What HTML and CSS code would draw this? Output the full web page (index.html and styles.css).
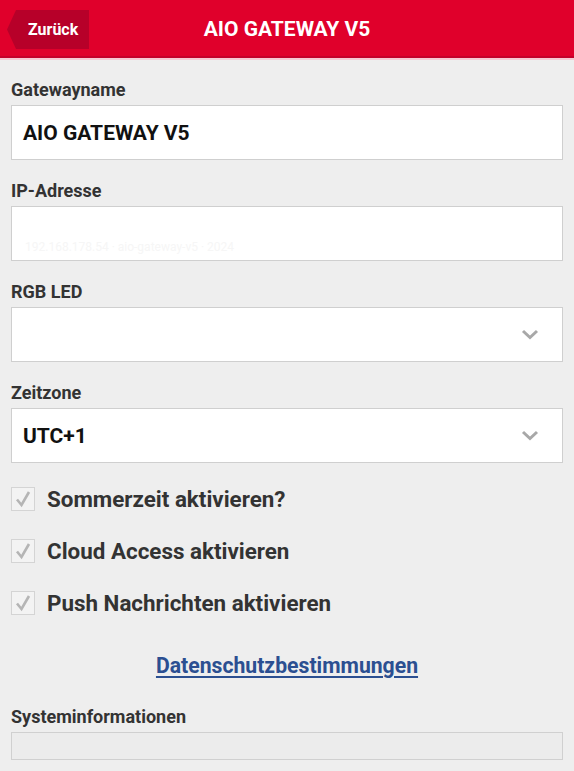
FILE: index.html
```html
<!DOCTYPE html>
<html lang="de">
<head>
<meta charset="utf-8">
<title>AIO GATEWAY V5</title>
<link rel="stylesheet" href="styles.css">
</head>
<body>
<header class="topbar">
  <a class="back" href="#">Zurück</a>
  <h1 class="title">AIO GATEWAY V5</h1>
</header>
<main class="content">
  <div class="field">
    <label class="label">Gatewayname</label>
    <div class="input"><span class="value">AIO GATEWAY V5</span></div>
  </div>
  <div class="field">
    <label class="label">IP-Adresse</label>
    <div class="input"><span class="faint">192.168.178.54 · aio-gateway-v5 · 2024</span></div>
  </div>
  <div class="field">
    <label class="label">RGB LED</label>
    <div class="input select"><span class="value"></span>
      <svg class="chev" width="18" height="11" viewBox="0 0 18 11"><path d="M2 2 L9 8.5 L16 2" fill="none" stroke="#a8a8a8" stroke-width="3"/></svg>
    </div>
  </div>
  <div class="field">
    <label class="label">Zeitzone</label>
    <div class="input select"><span class="value">UTC+1</span>
      <svg class="chev" width="18" height="11" viewBox="0 0 18 11"><path d="M2 2 L9 8.5 L16 2" fill="none" stroke="#a8a8a8" stroke-width="3"/></svg>
    </div>
  </div>
  <div class="checks">
    <div class="check"><span class="box"><svg width="22" height="22" viewBox="0 0 22 22"><path d="M5 11.5 L9.5 17 L17 4" fill="none" stroke="#b5b5b5" stroke-width="2.6"/></svg></span><span class="ctext">Sommerzeit aktivieren?</span></div>
    <div class="check"><span class="box"><svg width="22" height="22" viewBox="0 0 22 22"><path d="M5 11.5 L9.5 17 L17 4" fill="none" stroke="#b5b5b5" stroke-width="2.6"/></svg></span><span class="ctext">Cloud Access aktivieren</span></div>
    <div class="check"><span class="box"><svg width="22" height="22" viewBox="0 0 22 22"><path d="M5 11.5 L9.5 17 L17 4" fill="none" stroke="#b5b5b5" stroke-width="2.6"/></svg></span><span class="ctext">Push Nachrichten aktivieren</span></div>
  </div>
  <div class="linkrow"><a class="link" href="#">Datenschutzbestimmungen</a></div>
  <div class="field sys">
    <label class="label">Systeminformationen</label>
    <div class="input disabled"></div>
  </div>
</main>
</body>
</html>
```
FILE: styles.css
```css
* { box-sizing: border-box; }
html, body { margin: 0; padding: 0; }
body {
  background: #eeeeee;
  font-family: Roboto, "Liberation Sans", Arial, sans-serif;
  width: 574px;
  height: 771px;
  overflow: hidden;
}
.topbar {
  height: 60px;
  background: #e0002b;
  border-bottom: 2px solid #f6c9d2;
  box-shadow: inset 0 -2px 0 #c4002a;
  display: flex;
  align-items: center;
  justify-content: center;
  position: relative;
}
.back {
  position: absolute;
  left: 7px;
  top: 10px;
  height: 39px;
  width: 82px;
  background: #b70029;
  color: #fff;
  text-decoration: none;
  font-weight: 700;
  font-size: 16px;
  display: flex;
  align-items: center;
  padding-left: 21px;
  clip-path: polygon(9px 0, 100% 0, 100% 100%, 9px 100%, 0 50%);
}
.title {
  margin: 0;
  color: #fff;
  font-size: 21px;
  font-weight: 700;
}
.content {
  padding: 19px 11px 0 11px;
}
.field { display: flex; flex-direction: column; margin-bottom: 20px; }
.label {
  font-weight: 700;
  font-size: 18px;
  color: #333;
  line-height: 22px;
  margin-bottom: 4px;
}
.input {
  height: 55px;
  background: #fff;
  border: 1px solid #cfcfcf;
  display: flex;
  align-items: center;
  padding: 0 11px;
  position: relative;
}
.value {
  font-weight: 700;
  font-size: 21px;
  color: #111;
}
.faint {
  font-size: 12px;
  color: #f6f6f6;
  margin-top: 26px;
  margin-left: 2px;
}
.chev { position: absolute; right: 23px; top: 21px; }
.checks { display: flex; flex-direction: column; gap: 28px; padding-top: 4px; }
.check { display: flex; align-items: center; height: 24px; }
.box {
  width: 24px;
  height: 24px;
  border: 1px solid #d4d4d4;
  background: #f3f3f3;
  display: flex;
  align-items: center;
  justify-content: center;
  margin-right: 12px;
}
.ctext { font-weight: 700; font-size: 22.4px; color: #333; }
.linkrow { text-align: center; margin-top: 38px; margin-bottom: 28px; }
.link {
  color: #2b4f91;
  font-weight: 700;
  font-size: 21.2px;
  text-decoration: underline;
  text-underline-offset: 3px;
}
.sys .label { margin-bottom: 4px; }
.input.disabled { height: 28px; background: #ececec; border-color: #d0d0d0; }
```
